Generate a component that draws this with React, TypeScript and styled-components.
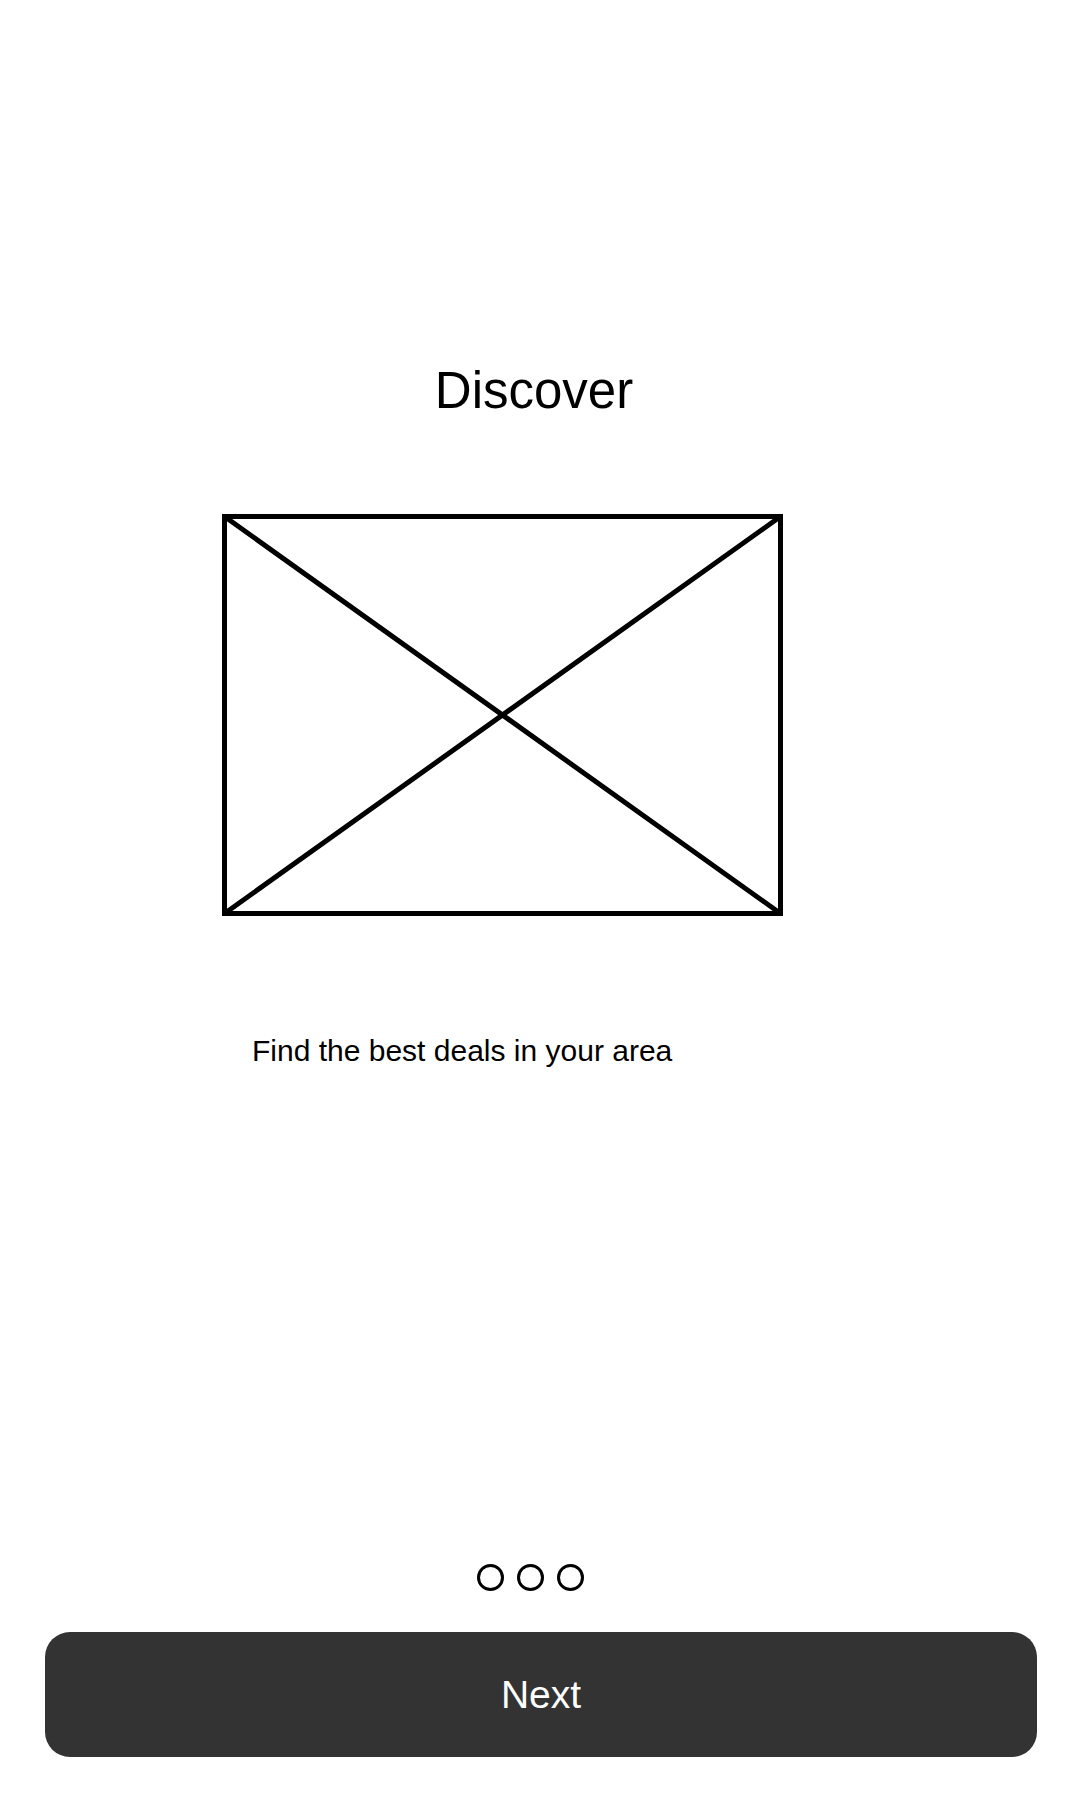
import React from "react";
import styled, { createGlobalStyle } from "styled-components";

const GlobalStyle = createGlobalStyle`
  html, body {
    margin: 0;
    padding: 0;
    background: #ffffff;
  }
  body {
    font-family: "Liberation Sans", Arial, sans-serif;
    color: #000000;
  }
`;

const Screen = styled.div`
  display: flex;
  flex-direction: column;
  width: 1080px;
  min-height: 1800px;
  box-sizing: border-box;
  padding: 362px 0 43px;
`;

const Title = styled.h1`
  margin: 0;
  padding-right: 12px;
  font-size: 51px;
  font-weight: 400;
  line-height: 58px;
  text-align: center;
`;

const Placeholder = styled.div`
  margin: 94px 0 0 222px;
  width: 561px;
  height: 402px;
`;

const Caption = styled.p`
  margin: 118px 0 0 252px;
  font-size: 30px;
  line-height: 34px;
`;

const Spacer = styled.div`
  flex: 1;
`;

const Dots = styled.div`
  display: flex;
  gap: 13px;
  padding-left: 477px;
  margin-bottom: 41px;
`;

const Dot = styled.span<{ $active?: boolean }>`
  width: 27px;
  height: 27px;
  box-sizing: border-box;
  border: 3px solid #000;
  border-radius: 50%;
  background: ${(p) => (p.$active ? "#000" : "transparent")};
`;

const NextButton = styled.button`
  display: flex;
  align-items: center;
  justify-content: center;
  margin: 0 43px 0 45px;
  height: 125px;
  border: none;
  border-radius: 25px;
  background: #333333;
  color: #ffffff;
  font-family: "Liberation Sans", Arial, sans-serif;
  font-size: 39px;
  cursor: pointer;
`;

const ImageMark: React.FC = () => (
  <svg width="561" height="402" viewBox="0 0 561 402">
    <g stroke="#000" strokeWidth="5" fill="none" strokeLinecap="square">
      <rect x="2.5" y="2.5" width="556" height="397" />
      <line x1="2.5" y1="2.5" x2="558.5" y2="399.5" />
      <line x1="558.5" y1="2.5" x2="2.5" y2="399.5" />
    </g>
  </svg>
);

const App: React.FC = () => {
  return (
    <>
      <GlobalStyle />
      <Screen>
        <Title>Discover</Title>
        <Placeholder>
          <ImageMark />
        </Placeholder>
        <Caption>Find the best deals in your area</Caption>
        <Spacer />
        <Dots>
          <Dot />
          <Dot />
          <Dot />
        </Dots>
        <NextButton>Next</NextButton>
      </Screen>
    </>
  );
};

export default App;
